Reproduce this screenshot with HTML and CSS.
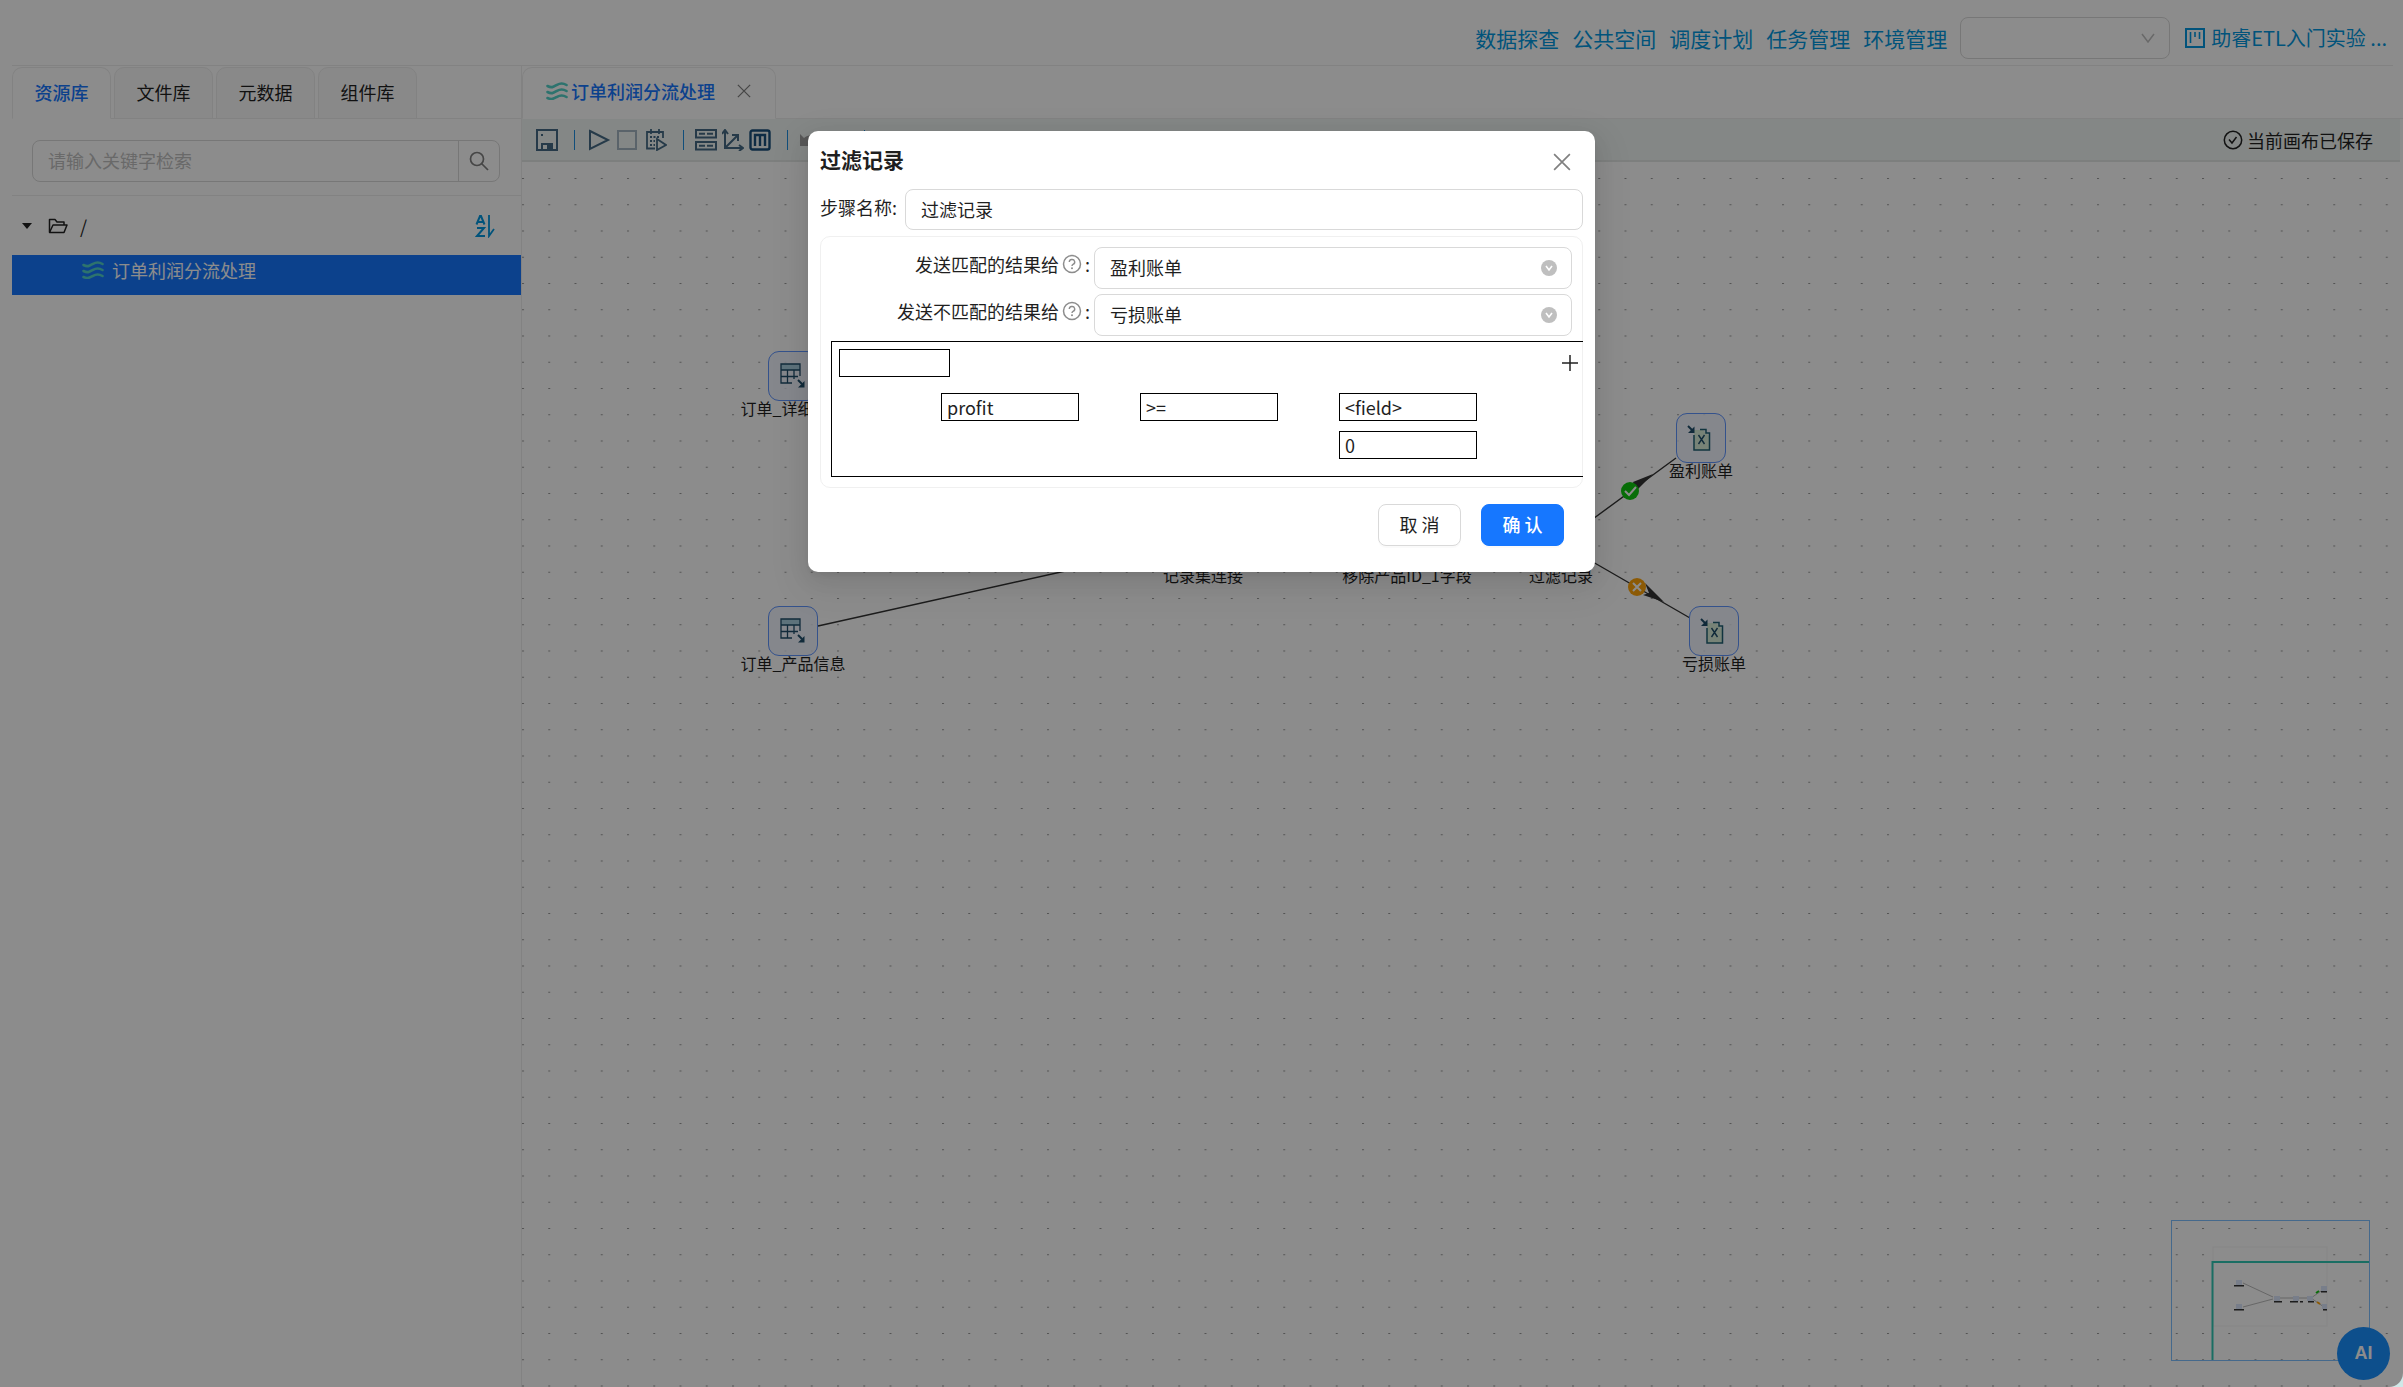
FILE: index.html
```html
<!DOCTYPE html>
<html lang="zh-CN">
<head>
<meta charset="utf-8">
<title>订单利润分流处理</title>
<link rel="stylesheet" href="styles.css">
</head>
<body>
<svg class="defs" aria-hidden="true">
  <symbol id="waves" viewBox="0 0 22 18"><g fill="none" stroke="currentColor" stroke-width="2.6" stroke-linecap="round"><path d="M1.5 4C6 6.5 8 4.500 11 2.800S17 .8 20.500 3"/><path d="M1.500 10C6 12.500 8 10.500 11 8.800S17 6.800 20.500 9"/><path d="M1.500 16C6 18 8 16.500 11 14.800S17 12.800 20.500 15"/></g></symbol>
  <symbol id="table-in" viewBox="0 0 26 26"><path d="M1 1h19v6H1z" fill="#a9cfe0"/><g fill="none" stroke="#1f4e6b" stroke-width="1.300"><path d="M20 13V1H1v19h11M1 7h19M1 13.500h17M7.500 7v13M14 7v9"/></g><path d="M18 17l4 4" stroke="#1f4e6b" stroke-width="2"/><path d="M24.500 18v6.500H18z" fill="#1f4e6b"/></symbol>
  <symbol id="excel-out" viewBox="0 0 28 26"><path d="M7 25V5h9l6 6v14z" fill="#d9efd9"/><path d="M13 4.500h6V8h3.500v17H7V10" fill="none" stroke="#1f6074" stroke-width="1.500"/><path d="M11.500 10l6 9m0-9l-6 9" stroke="#1f4e6b" stroke-width="1.400"/><path d="M1 1l4 4" stroke="#1f4e6b" stroke-width="2"/><path d="M7.500 1.500V8H1z" fill="#1f4e6b"/></symbol>
  <symbol id="help" viewBox="0 0 20 20"><circle cx="10" cy="10" r="8.500" fill="none" stroke="currentColor" stroke-width="1.500"/><path d="M7.300 8a2.700 2.500 0 1 1 3.700 2.300c-.8.4-1 .8-1 1.700" fill="none" stroke="currentColor" stroke-width="1.400"/><circle cx="10" cy="14.300" r="1" fill="currentColor"/></symbol>
  <symbol id="down" viewBox="0 0 16 16"><circle cx="8" cy="8" r="8" fill="#bfbfbf"/><path d="M5 6l3 4 3-4" fill="none" stroke="#fff" stroke-width="1.600"/></symbol>
  <symbol id="cross" viewBox="0 0 16 16"><path d="M1 1l14 14M15 1L1 15" fill="none" stroke="currentColor" stroke-width="1.500"/></symbol>
</svg>
<div class="app">
  <header class="topbar">
    <nav class="links">
      <a href="#">数据探查</a><a href="#">公共空间</a><a href="#">调度计划</a><a href="#">任务管理</a><a href="#">环境管理</a>
    </nav>
    <div class="select env">
      <select aria-label="环境"><option></option></select>
      <svg width="14" height="10" viewBox="0 0 14 10"><path d="M1 1l6 8 6-8" fill="none" stroke="#bfbfbf" stroke-width="1.500"/></svg>
    </div>
    <a class="project" href="#">
      <svg width="20" height="20" viewBox="0 0 20 20" fill="none" stroke="currentColor"><path d="M1 1h18v18H1z" stroke-width="2"/><path d="M5.500 4v11M10 4v5M14.500 4v7" stroke-width="1.600"/></svg>
      助睿ETL入门实验 ...
    </a>
  </header>
  <div class="main">
    <aside class="side">
      <div class="tabs">
        <button class="tab active">资源库</button>
        <button class="tab">文件库</button>
        <button class="tab">元数据</button>
        <button class="tab">组件库</button>
      </div>
      <form class="search">
        <input type="text" placeholder="请输入关键字检索" aria-label="检索">
        <button type="button" aria-label="搜索"><svg width="20" height="20" viewBox="0 0 20 20" fill="none" stroke="#808080" stroke-width="1.700"><circle cx="8" cy="8" r="6.500"/><path d="M12.500 12.500L19 19"/></svg></button>
      </form>
      <div class="tree">
        <div class="root">
          <svg class="caret" width="10" height="6" viewBox="0 0 10 6"><path d="M0 0h10L5 6z" fill="#222"/></svg>
          <svg width="20" height="16" viewBox="0 0 20 16" fill="none" stroke="#222" stroke-width="1.500" stroke-linejoin="round"><path d="M1.500 14V1.500h5.500l2 2.500h7v3"/><path d="M1.500 14.500L5 7h14l-3 7.500z"/></svg>
          <span>/</span>
          <button class="sort" aria-label="排序"><svg width="20" height="24" viewBox="0 0 20 24" fill="none" stroke="currentColor" stroke-width="2"><path d="M1.500 10.500L5 2h1l3.500 8.500M3 8h5M2 14h7L2 22h8"/><path d="M14 1v21l5-7" stroke-width="1.800"/></svg></button>
        </div>
        <a class="leaf" href="#"><svg width="22" height="18"><use href="#waves"/></svg>订单利润分流处理</a>
      </div>
    </aside>
    <section class="work">
      <div class="tabs">
        <div class="tab doc active"><svg class="teal" width="22" height="18"><use href="#waves"/></svg><a href="#">订单利润分流处理</a>
          <button class="plain" aria-label="关闭标签"><svg width="14" height="14"><use href="#cross"/></svg></button></div>
      </div>
      <div class="toolbar">
        <button aria-label="保存"><svg width="22" height="22" viewBox="0 0 22 22" fill="none" stroke="currentColor" stroke-width="2"><path d="M1 1h20v20H1z"/><path d="M6 21v-6h10v6"/><path d="M11 16h4v5h-4zM5 5h2v2H5z" fill="currentColor" stroke="none"/></svg></button>
        <i class="sep"></i>
        <button aria-label="运行"><svg width="26" height="22" viewBox="-2 0 26 22" fill="none" stroke="currentColor" stroke-width="2"><path d="M2 2l18 9-18 9z"/></svg></button>
        <button class="dim" aria-label="停止"><svg width="20" height="20" viewBox="0 0 20 20" fill="none" stroke="currentColor" stroke-width="2"><path d="M1 1h18v18H1z"/></svg></button>
        <button aria-label="调度"><svg width="25" height="22" viewBox="-4 0 25 22" fill="none" stroke="currentColor" stroke-width="1.800"><path d="M9 19.500H1V3h16v6M5 0v5M13 0v5M11 10l9 6-9 5z"/><path d="M4 8h10M4 12h5M4 16h5" stroke-dasharray="2 1.500"/></svg></button>
        <i class="sep"></i>
        <button aria-label="表格"><svg width="22" height="22" viewBox="0 0 22 22" fill="none" stroke="currentColor" stroke-width="2"><path d="M1 1h20v7.500H1zM1 13h20v7.500H1z"/><path d="M4 4.800h14M4 16.800h14" stroke-dasharray="6 2"/></svg></button>
        <button aria-label="坐标"><svg width="22" height="22" viewBox="0 0 22 22" fill="none" stroke="currentColor" stroke-width="2"><path d="M3 1v18h18M4 18L15 7"/><path d="M0 5l3-4 3 4M17 16l4 3-4 3M10 6h6v6"/></svg></button>
        <button class="deep" aria-label="监控"><svg width="22" height="22" viewBox="0 0 22 22" fill="none" stroke="currentColor" stroke-width="2.400"><rect x="1.500" y="1.500" width="19" height="19" rx="2"/><path d="M6 17V6h10v11M11 6v11"/></svg></button>
        <i class="sep"></i>
        <button class="dim" aria-label="撤销"><svg width="22" height="22" viewBox="0 0 22 22"><path d="M1 5v12h12L9 13c3-3 7-2 9 2 2-7-6-12-13-6z" fill="#a0a0a0"/></svg></button>
        <button class="dim" aria-label="重做"><svg width="22" height="22" viewBox="0 0 22 22"><path d="M21 5v12H9l4-4c-3-3-7-2-9 2C2 8 10 3 17 9z" fill="#a0a0a0"/></svg></button>
        <i class="sep"></i>
        <span class="saved"><svg width="20" height="20" viewBox="0 0 20 20" fill="none" stroke="#222" stroke-width="1.500"><circle cx="10" cy="10" r="8.700"/><path d="M6 9.500l3 3.500 4.500-6"/></svg>当前画布已保存</span>
      </div>
      <div class="canvas">
        <svg class="edges" width="100%" height="100%">
          <defs><pattern id="dots" width="26.25" height="26.25" patternUnits="userSpaceOnUse" y="16"><rect width="2" height="1" fill="#999"/></pattern></defs>
          <rect width="100%" height="100%" fill="url(#dots)"/>
          <g stroke="#333" stroke-width="1.400"><path d="M296 221L656 376M296 464L656 384M706 381H860M910 381H1014M1064 362L1154 296M1064 396L1168 456"/></g>
          <g fill="#333"><path d="M1131 312l-20 8 3 9zM1142 440l-21-7 6-2-4-10z"/></g>
          <circle cx="1108" cy="329" r="9" fill="#10c810"/><path d="M1103 329l4 4 7-8" fill="none" stroke="#fff" stroke-width="2"/>
          <circle cx="1115" cy="425" r="9" fill="#ffa50a"/><path d="M1111 421l8 8m0-8l-8 8" stroke="#fff" stroke-width="2"/>
        </svg>
        <div class="node" style="left:246px;top:189px"><i><svg width="26" height="26"><use href="#table-in"/></svg></i><span>订单_详细信息</span></div>
        <div class="node" style="left:246px;top:444px"><i><svg width="26" height="26"><use href="#table-in"/></svg></i><span>订单_产品信息</span></div>
        <div class="node" style="left:656px;top:356px"><i></i><span>记录集连接</span></div>
        <div class="node" style="left:860px;top:356px"><i></i><span>移除产品ID_1字段</span></div>
        <div class="node" style="left:1014px;top:356px"><i></i><span>过滤记录</span></div>
        <div class="node" style="left:1154px;top:251px"><i><svg width="28" height="26"><use href="#excel-out"/></svg></i><span>盈利账单</span></div>
        <div class="node" style="left:1167px;top:444px"><i><svg width="28" height="26"><use href="#excel-out"/></svg></i><span>亏损账单</span></div>
        <svg class="minimap" viewBox="0 0 199 141" width="199" height="141">
          <rect x="42" y="27" width="114" height="79" fill="#fff" stroke="#f4f4f4"/>
          <g stroke="#bbb" stroke-width="1" fill="none"><path d="M72 63L102 77M72 87L102 79M108 78H140L153 69M140 78L153 87"/></g>
          <g fill="#dbe6fb"><path d="M65 60h6v5h-6zM65 84h6v5h-6zM103 76h6v5h-6zM122 76h6v5h-6zM136 76h6v5h-6zM150 66h6v5h-6zM151 84h5v5h-5z"/></g>
          <g fill="#333"><path d="M63 65h10v1.500H63zM63 89h10v1.500H63zM103 81h8v1.500h-8zM119 81h8v1.500h-8zM129 81h3v1.500h-3zM137 81h6v1.500h-6zM150 71h6v1.500h-6zM152 89h4v1.500h-4z"/></g>
          <path d="M145 73l3-2" stroke="#10c810" stroke-width="2"/><path d="M146 82l3 2" stroke="#ffa50a" stroke-width="2"/>
          <path d="M41.500 140V42H198" fill="none" stroke="#30c9b5" stroke-width="2"/>
          <rect x=".5" y=".5" width="198" height="140" fill="none" stroke="#7fbfff"/>
        </svg>
      </div>
    </section>
  </div>
  <button class="ai">AI</button>
  <div class="mask">
    <form class="modal" role="dialog" aria-label="过滤记录">
      <div class="head"><h2>过滤记录</h2><button type="button" class="plain" aria-label="关闭"><svg width="18" height="18"><use href="#cross"/></svg></button></div>
      <div class="step"><label for="name">步骤名称:</label><input id="name" type="text" value="过滤记录"></div>
      <div class="panel">
        <div class="field"><label for="hit">发送匹配的结果给 <svg width="20" height="20"><use href="#help"/></svg> :</label>
          <div class="select"><select id="hit"><option>盈利账单</option></select><svg width="16" height="16"><use href="#down"/></svg></div></div>
        <div class="field"><label for="miss">发送不匹配的结果给 <svg width="20" height="20"><use href="#help"/></svg> :</label>
          <div class="select"><select id="miss"><option>亏损账单</option></select><svg width="16" height="16"><use href="#down"/></svg></div></div>
        <div class="cond">
          <div class="line"><button type="button" class="box op" aria-label="取反"></button><button type="button" class="plain" aria-label="添加条件"><svg width="16" height="16" viewBox="0 0 16 16"><path d="M8 0v16M0 8h16" stroke="#222" stroke-width="1.500"/></svg></button></div>
          <div class="terms">
            <button type="button" class="box">profit</button><button type="button" class="box">&gt;=</button><button type="button" class="box">&lt;field&gt;</button>
            <button type="button" class="box value">0</button>
          </div>
        </div>
      </div>
      <div class="foot"><button type="button" class="btn">取 消</button><button type="button" class="btn primary">确 认</button></div>
    </form>
  </div>
</div>
</body>
</html>
```

FILE: styles.css
```css
* { box-sizing: border-box; }
body { margin: 0; background: #cfe8e8; color: #1f1f1f; font: 18px/24px "Noto Sans CJK SC", sans-serif; }
button, input, select { font: inherit; color: inherit; margin: 0; }
button { cursor: pointer; }
a { color: inherit; text-decoration: none; }
svg { display: block; flex: none; }
.defs { position: absolute; width: 0; height: 0; }
.plain { border: 0; padding: 0; background: none; color: #808080; }

.app { position: relative; display: flex; flex-direction: column; min-height: 100vh; background: #fff; border-bottom-right-radius: 14px; overflow: hidden; }

/* top bar */
.topbar { display: flex; align-items: center; justify-content: flex-end; gap: 13px; height: 66px; margin: 0 10px 0 12px; padding: 10px 6px 0 0; border-bottom: 1px solid #ededed; color: #0298e0; font-size: 21px; }
.links { display: flex; gap: 13px; }
.project { display: flex; align-items: center; gap: 6px; margin-left: 2px; font-size: 20px; }
.select { position: relative; height: 42px; }
.select select { width: 100%; height: 100%; padding: 0 15px 2px; border: 1px solid #d9d9d9; border-radius: 8px; background: #fff; appearance: none; }
.select > svg { position: absolute; right: 15px; top: 50%; transform: translateY(-50%); pointer-events: none; }
.env { width: 210px; }

.main { flex: 1; display: flex; }

/* resource panel */
.side { width: 522px; padding-left: 12px; border-right: 1px solid #ededed; }
.tabs { display: flex; gap: 3px; height: 53px; padding-top: 1px; border-bottom: 1px solid #ededed; }
.tab { height: 52px; padding: 0 21px 2px; border: 1px solid #ededed; border-radius: 10px 10px 0 0; background: #fafafa; white-space: nowrap; }
.tab.active { border-bottom-color: #fff; background: #fff; color: #1677ff; font-weight: 500; }
.side .tab { width: 99px; }
.search { display: flex; height: 42px; margin: 21px 21px 13px 20px; border: 1px solid #d9d9d9; border-radius: 8px; }
.search input { flex: 1; min-width: 0; padding: 0 15px 2px; border: 0; background: none; }
.search input::placeholder { color: #bfbfbf; opacity: 1; }
.search button { display: flex; align-items: center; justify-content: center; width: 41px; padding: 0; border: 0; border-left: 1px solid #d9d9d9; background: none; }
.root { display: flex; align-items: center; height: 60px; padding: 0 26px 0 10px; border-top: 1px solid #ededed; }
.caret { margin-right: 16px; }
.root span { margin-left: 12px; }
.sort { margin-left: auto; padding: 0; border: 0; background: none; color: #0298e0; }
.leaf { display: flex; align-items: center; gap: 8px; height: 40px; padding: 0 0 10px 70px; background: #1677ff; color: #fff; }
.leaf svg, .teal { color: #52d1c8; }

/* work area */
.work { flex: 1; min-width: 0; display: flex; flex-direction: column; }
.doc { display: flex; align-items: center; gap: 3px; width: 254px; padding: 0 24px 5px 23px; }
.doc .plain { margin-left: auto; }
.toolbar { display: flex; align-items: center; gap: 5px; height: 43px; margin-right: 3px; padding: 0 27px 0 14px; border-bottom: 2px solid #e4e8e6; background: #f0f6f4; color: #456b85; }
.toolbar button { padding: 0; border: 0; background: none; color: inherit; }
.toolbar .dim { color: #a5b5c2; }
.toolbar .deep { color: #1b507c; }
.sep { width: 1px; height: 20px; margin: 0 6px 0 11px; background: #1f8fe0; }
.saved { display: flex; align-items: center; gap: 4px; margin-left: auto; color: #1f1f1f; }
.canvas { position: relative; flex: 1; overflow: hidden; }
.edges { position: absolute; inset: 0; }
.node { position: absolute; display: flex; flex-direction: column; align-items: center; width: 50px; font-size: 16px; line-height: 14px; white-space: nowrap; }
.node i { display: flex; align-items: center; justify-content: center; flex: none; width: 50px; height: 50px; border: 1px solid #5f95ff; border-radius: 11px; background: rgba(239, 244, 255, .8); }
.minimap { position: absolute; right: 33px; bottom: 26px; }
.ai { position: absolute; right: 13px; bottom: 7px; width: 53px; height: 53px; padding: 0; border: 0; border-radius: 50%; background: #1890ff; color: #fff; font: bold 18px "Liberation Sans", sans-serif; }

/* dialog */
.mask { position: absolute; inset: 0; display: flex; justify-content: center; align-items: flex-start; padding-top: 131px; background: rgba(0, 0, 0, .45); }
.modal { width: 787px; padding: 14px 12px 26px; border-radius: 10px; background: #fff; box-shadow: 0 8px 21px rgba(0, 0, 0, .08), 0 4px 8px -5px rgba(0, 0, 0, .12), 0 12px 36px 10px rgba(0, 0, 0, .05); }
.head { display: flex; justify-content: space-between; height: 34px; margin-bottom: 10px; padding-right: 12px; }
h2 { margin: 0; font-size: 21px; line-height: 28px; font-weight: 700; }
.step { display: flex; gap: 8px; margin-bottom: 6px; }
.step label { line-height: 36px; }
.step input { flex: 1; height: 41px; padding: 0 15px 2px; border: 1px solid #d9d9d9; border-radius: 8px; }
.panel { padding: 10px; border: 1px solid #f0f0f0; border-radius: 10px; }
.field { display: flex; gap: 4px; margin-bottom: 5px; }
.field label { flex: 1; display: flex; align-items: center; justify-content: flex-end; gap: 3px; height: 34px; }
.field label svg { color: #8c8c8c; }
.field .select { width: 478px; }
.cond { margin-right: -11px; padding: 7px 5px 17px 7px; border: 1px solid #000; border-right: 0; }
.line { display: flex; align-items: center; justify-content: space-between; margin-bottom: 16px; }
.box { height: 28px; padding: 0 5px; border: 1px solid #000; background: #fff; text-align: left; line-height: 22px; }
.op { width: 111px; }
.terms { display: grid; grid-template-columns: repeat(3, 138px); gap: 10px 61px; padding-left: 102px; }
.value { grid-column: 3; }
.foot { display: flex; justify-content: flex-end; gap: 20px; margin-top: 16px; padding-right: 19px; }
.btn { width: 83px; height: 42px; padding: 0 0 2px; border: 1px solid #d9d9d9; border-radius: 8px; background: #fff; box-shadow: 0 2px 0 rgba(0, 0, 0, .02); }
.primary { border-color: #1677ff; background: #1677ff; color: #fff; font-weight: 500; }
```
